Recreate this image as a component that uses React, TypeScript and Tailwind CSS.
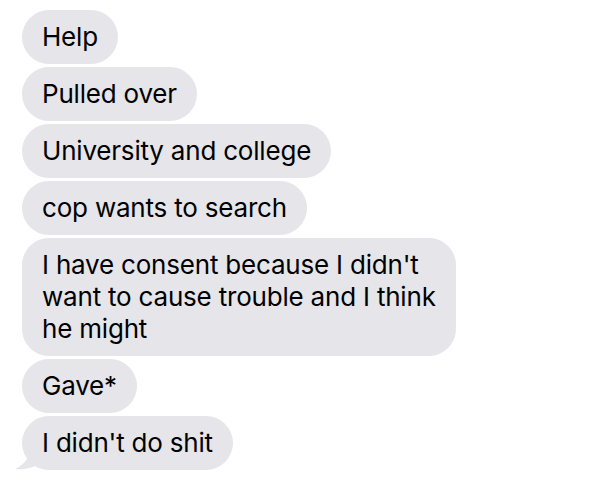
const messages: string[][] = [
  ["Help"],
  ["Pulled over"],
  ["University and college"],
  ["cop wants to search"],
  ["I have consent because I didn't", "want to cause trouble and I think", "he might"],
  ["Gave*"],
];

function Bubble({ lines, tail }: { lines: string[]; tail?: boolean }) {
  return (
    <div className="relative w-fit">
      {tail && (
        <svg
          className="absolute left-[-8px] bottom-0"
          width="30"
          height="24"
          viewBox="0 0 30 24"
        >
          <path d="M16 0 C16 10 12 18 1 23 C10 24 20 22 28 16 L28 0 Z" fill="#e5e5ea" />
        </svg>
      )}
      <div className="relative rounded-[27px] bg-[#e5e5ea] pl-5 pr-[20px] py-[11px] text-[26px] leading-[32px] text-black font-['Inter',sans-serif] tracking-[-0.2px]">
        {lines.map((l, i) => (
          <div key={i}>{l}</div>
        ))}
      </div>
    </div>
  );
}

export default function App() {
  return (
    <div className="w-[592px] h-[482px] bg-white pl-[22px] pt-[10px] flex flex-col gap-[3px]">
      {messages.map((m, i) => (
        <Bubble key={i} lines={m} />
      ))}
      <Bubble lines={["I didn't do shit"]} tail />
    </div>
  );
}
